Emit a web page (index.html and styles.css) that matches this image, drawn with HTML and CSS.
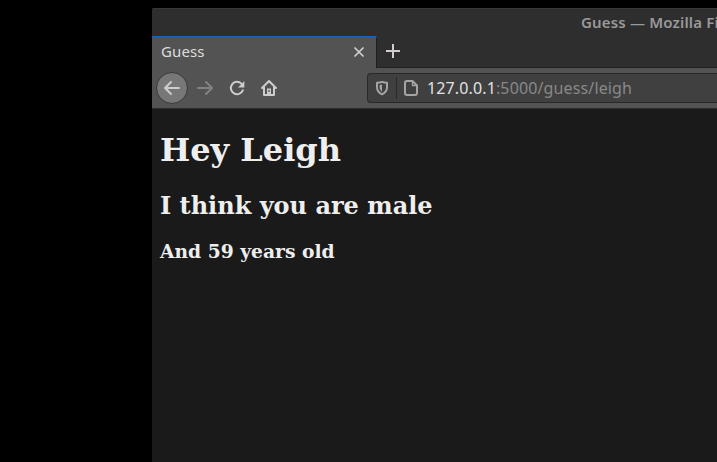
FILE: index.html
```html
<!DOCTYPE html>
<html lang="en">
<head>
<meta charset="utf-8">
<title>Guess</title>
<link rel="stylesheet" href="styles.css">
</head>
<body>
<div class="window">
  <div class="titlebar"><span class="window-title">Guess — Mozilla Firefox</span></div>
  <div class="tabs">
    <div class="tab">
      <span class="tab-label">Guess</span>
      <svg class="close" width="12" height="12" viewBox="0 0 12 12"><path d="M2 2l8 8M10 2l-8 8"/></svg>
    </div>
    <div class="new-tab"><svg width="16" height="16" viewBox="0 0 16 16"><path d="M8 1v14M1 8h14"/></svg></div>
  </div>
  <div class="toolbar">
    <div class="back"><svg width="18" height="18" viewBox="0 0 18 18"><path d="M16 9H2M8 3L2 9l6 6"/></svg></div>
    <svg class="forward" width="18" height="18" viewBox="0 0 18 18"><path d="M2 9h14M10 3l6 6-6 6"/></svg>
    <svg class="reload" width="18" height="18" viewBox="0 0 18 18"><path d="M14.800 11.300A6.200 6.200 0 1 1 13.400 4.600L15 6.200"/><path class="solid" d="M16.400 2v6.500H10z"/></svg>
    <svg class="home" width="18" height="18" viewBox="0 0 18 18"><path d="M2 9l7-7 7 7M4 8v8h10V8"/><path class="solid" d="M7 9.500h4V16H7z"/><path class="knob" d="M9 11v2"/></svg>
    <div class="urlbar">
      <svg class="shield" width="14" height="16" viewBox="0 0 14 16"><path d="M7 1.800C5.300 2.500 3.600 2.700 2 2.700v4.600c0 3.200 2 5.600 5 7 3-1.400 5-3.800 5-7V2.700c-1.600 0-3.300-.2-5-.9z"/><path class="solid" d="M7 4.500c-.9.300-1.500.4-2.400.5v2.500c0 1.700.8 3.100 2.400 4.200z"/></svg>
      <span class="divider"></span>
      <svg class="page-icon" width="14" height="16" viewBox="0 0 14 16"><path d="M3 1h5.500L13 5.500V13a2 2 0 0 1-2 2H3a2 2 0 0 1-2-2V3a2 2 0 0 1 2-2z"/><path class="fold" d="M8.500 1v4.500H13"/></svg>
      <span class="url"><span class="host">127.0.0.1</span>:5000/guess/leigh</span>
    </div>
  </div>
  <main class="page">
    <h1>Hey Leigh</h1>
    <h2>I think you are male</h2>
    <h3>And 59 years old</h3>
  </main>
</div>
</body>
</html>
```
FILE: styles.css
```css
* { box-sizing: border-box; }
body { margin: 0; height: 462px; overflow: hidden; background: #000; padding: 8px 0 0 152px; font-family: "Noto Sans", sans-serif; }
svg { display: block; flex: none; fill: none; stroke: #ccc; stroke-width: 2; stroke-linecap: round; stroke-linejoin: round; }
.window { height: 454px; display: flex; flex-direction: column; background: #1a1a1a; border-top-left-radius: 2px; overflow: hidden; }
.titlebar { height: 28px; flex: none; background: #2e2e2e; border-top: 1px solid #373737; padding-left: 429px; white-space: nowrap; overflow: hidden; }
.window-title { font-size: 15px; font-weight: 600; line-height: 26px; color: #999; letter-spacing: 0.17px; }
.tabs { height: 32px; flex: none; display: flex; background: #2e2e2e; border-bottom: 1px solid #202020; }
.tab { width: 225px; height: 32px; display: flex; align-items: center; justify-content: space-between; padding: 0 11px 3px 9px; background: #535353; border-top: 2px solid #1662b8; border-right: 1px solid #1e1e1e; }
.tab-label { font-size: 15px; line-height: 20px; margin-top: -2px; color: #ddd; letter-spacing: 0.1px; }
.close { stroke-width: 1.7; stroke: #d0d0d0; }
.new-tab { padding: 7px 0 0 8px; }
.new-tab svg { stroke: #d4cccc; stroke-linecap: butt; }
.toolbar { height: 41px; flex: none; display: flex; align-items: center; background: #535353; border-bottom: 1px solid #2b2b2b; padding-left: 4px; }
.back { width: 32px; height: 32px; display: flex; align-items: center; justify-content: center; border: 1px solid #3a3a3a; border-radius: 50%; background: #777; }
.forward { margin-left: 8px; stroke: #838383; }
.reload { margin-left: 14px; }
.home { margin-left: 14px; }
.solid { fill: #ccc; stroke: none; }
.knob { stroke: #535353; stroke-width: 1.3; stroke-linecap: butt; }
.urlbar { height: 30px; flex: 1; margin-left: 89px; display: flex; align-items: center; background: #404040; border: 1px solid #292929; border-right: 0; border-radius: 4px 0 0 4px; padding-left: 7px; }
.urlbar svg { stroke: #a4a4a4; }
.urlbar .solid { fill: #a4a4a4; stroke: none; }
.divider { width: 1px; height: 22px; margin-left: 7px; background: #292929; }
.page-icon { margin-left: 7px; }
.urlbar .fold { stroke-width: 1.4; }
.url { margin-left: 9px; font-size: 16px; color: #888; white-space: nowrap; letter-spacing: 0.13px; }
.host { color: #e2e2e2; }
.page { padding: 1px 8px 0; color: #eee; font-family: "DejaVu Serif", serif; }
h1 { margin: 21.44px 0; font-size: 32px; }
h2 { margin: 19.92px 0; font-size: 24px; }
h3 { margin: 18.72px 0; font-size: 18.72px; }
```
